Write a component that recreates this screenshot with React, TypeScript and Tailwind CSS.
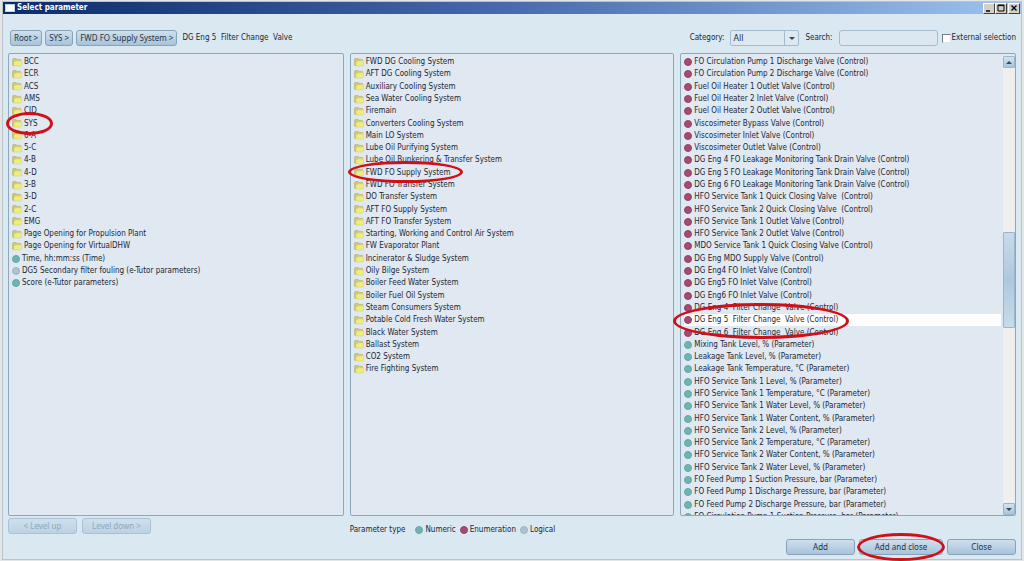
import type { ReactNode } from "react";
import clsx from "clsx";

type Kind = "folder" | "numeric" | "enumeration" | "logical";

type Item = {
  kind: Kind;
  label: string;
};

const toItems = (kind: Kind, labels: string[]): Item[] =>
  labels.map((label) => ({ kind, label }));

const groups: Item[] = [
  ...toItems("folder", [
    "BCC",
    "ECR",
    "ACS",
    "AMS",
    "CID",
    "SYS",
    "6-A",
    "5-C",
    "4-B",
    "4-D",
    "3-B",
    "3-D",
    "2-C",
    "EMG",
    "Page Opening for Propulsion Plant",
    "Page Opening for VirtualDHW",
  ]),
  { kind: "numeric", label: "Time, hh:mm:ss (Time)" },
  { kind: "logical", label: "DG5 Secondary filter fouling (e-Tutor parameters)" },
  { kind: "numeric", label: "Score (e-Tutor parameters)" },
];

const systems = toItems("folder", [
  "FWD DG Cooling System",
  "AFT DG Cooling System",
  "Auxiliary Cooling System",
  "Sea Water Cooling System",
  "Firemain",
  "Converters Cooling System",
  "Main LO System",
  "Lube Oil Purifying System",
  "Lube Oil Bunkering & Transfer System",
  "FWD FO Supply System",
  "FWD FO Transfer System",
  "DO Transfer System",
  "AFT FO Supply System",
  "AFT FO Transfer System",
  "Starting, Working and Control Air System",
  "FW Evaporator Plant",
  "Incinerator & Sludge System",
  "Oily Bilge System",
  "Boiler Feed Water System",
  "Boiler Fuel Oil System",
  "Steam Consumers System",
  "Potable Cold Fresh Water System",
  "Black Water System",
  "Ballast System",
  "CO2 System",
  "Fire Fighting System",
]);

const parameters: Item[] = [
  ...toItems("enumeration", [
    "FO Circulation Pump 1 Discharge Valve (Control)",
    "FO Circulation Pump 2 Discharge Valve (Control)",
    "Fuel Oil Heater 1 Outlet Valve (Control)",
    "Fuel Oil Heater 2 Inlet Valve (Control)",
    "Fuel Oil Heater 2 Outlet Valve (Control)",
    "Viscosimeter Bypass Valve (Control)",
    "Viscosimeter Inlet Valve (Control)",
    "Viscosimeter Outlet Valve (Control)",
    "DG Eng 4 FO Leakage Monitoring Tank Drain Valve (Control)",
    "DG Eng 5 FO Leakage Monitoring Tank Drain Valve (Control)",
    "DG Eng 6 FO Leakage Monitoring Tank Drain Valve (Control)",
    "HFO Service Tank 1 Quick Closing Valve  (Control)",
    "HFO Service Tank 2 Quick Closing Valve  (Control)",
    "HFO Service Tank 1 Outlet Valve (Control)",
    "HFO Service Tank 2 Outlet Valve (Control)",
    "MDO Service Tank 1 Quick Closing Valve (Control)",
    "DG Eng MDO Supply Valve (Control)",
    "DG Eng4 FO Inlet Valve (Control)",
    "DG Eng5 FO Inlet Valve (Control)",
    "DG Eng6 FO Inlet Valve (Control)",
    "DG Eng 4  Filter Change  Valve (Control)",
    "DG Eng 5  Filter Change  Valve (Control)",
    "DG Eng 6  Filter Change  Valve (Control)",
  ]),
  ...toItems("numeric", [
    "Mixing Tank Level, % (Parameter)",
    "Leakage Tank Level, % (Parameter)",
    "Leakage Tank Temperature, °C (Parameter)",
    "HFO Service Tank 1 Level, % (Parameter)",
    "HFO Service Tank 1 Temperature, °C (Parameter)",
    "HFO Service Tank 1 Water Level, % (Parameter)",
    "HFO Service Tank 1 Water Content, % (Parameter)",
    "HFO Service Tank 2 Level, % (Parameter)",
    "HFO Service Tank 2 Temperature, °C (Parameter)",
    "HFO Service Tank 2 Water Content, % (Parameter)",
    "HFO Service Tank 2 Water Level, % (Parameter)",
    "FO Feed Pump 1 Suction Pressure, bar (Parameter)",
    "FO Feed Pump 1 Discharge Pressure, bar (Parameter)",
    "FO Feed Pump 2 Discharge Pressure, bar (Parameter)",
    "FO Circulation Pump 1 Suction Pressure, bar (Parameter)",
  ]),
];

function FolderIcon() {
  return (
    <svg viewBox="0 0 10 9" className="h-[9px] w-[10px] shrink-0" aria-hidden="true">
      <path d="M0.4 7V1.2L1 0.5H4.2L5 1.4H8.6V4H2.5V7.6H1Z" fill="#cbc777" stroke="#a9a872" strokeWidth="0.5" />
      <path d="M2 8V3.9L3 3.2L5 2.8H9.6V7.2L8.8 8Z" fill="#efec80" stroke="#d3cf72" strokeWidth="0.5" />
    </svg>
  );
}

function Dot({ kind }: { kind: Kind }) {
  return (
    <span
      className={clsx(
        "size-2 shrink-0 rounded-full border",
        kind === "numeric" && "border-[#62a9ab] bg-[#6fb3b2]",
        kind === "enumeration" && "border-[#92426a] bg-[#a54a70]",
        kind === "logical" && "border-[#9db3c5] bg-[#b0c2d1]"
      )}
    />
  );
}

function ItemList({ items, selected, label }: { items: Item[]; selected?: string; label: string }) {
  return (
    <ul
      aria-label={label}
      className="grid h-[467px] min-w-0 flex-1 grid-rows-[repeat(38,minmax(0,1fr))] pl-[3px]"
    >
      {items.map((item) => (
        <li
          key={item.label}
          className={clsx(
            "flex items-center gap-[2px] leading-3 whitespace-pre",
            item.label === selected && "bg-white"
          )}
        >
          {item.kind === "folder" ? <FolderIcon /> : <Dot kind={item.kind} />}
          {item.label}
        </li>
      ))}
    </ul>
  );
}

function Panel({ children, marker }: { children: ReactNode; marker: ReactNode }) {
  return (
    <section className="relative min-w-0">
      {/* the last row is cut off by the bottom border */}
      <div className="flex h-[463px] overflow-hidden rounded-[2px] border border-[#8ba9bb] bg-[#e0e8f1] pt-[2px]">
        {children}
      </div>
      {marker}
    </section>
  );
}

function Marker({ className }: { className: string }) {
  return (
    <span
      className={clsx("pointer-events-none absolute rounded-[50%] border-3 border-[#cf1019]", className)}
    />
  );
}

function Arrow({ up = false }: { up?: boolean }) {
  return (
    <svg viewBox="0 0 6 3" className="h-[3px] w-[6px]" aria-hidden="true">
      <path d={up ? "M0 3L3 0L6 3Z" : "M0 0L3 3L6 0Z"} fill="#34495c" />
    </svg>
  );
}

function ScrollBar() {
  const arrow =
    "flex h-3 items-center justify-center rounded-[1px] border border-[#9bb6cb] bg-linear-to-b from-[#d3e3f0] to-[#a9c5da]";
  return (
    <div className="ml-[2px] flex w-3 flex-col bg-[#efefee]">
      <button className={arrow} aria-label="Scroll up">
        <Arrow up />
      </button>
      <div className="flex flex-1 flex-col">
        <div className="grow-165" />
        <div className="grow-94 rounded-[1px] border border-[#9bb6cb] bg-linear-to-b from-[#c8dbea] via-[#adc8de] to-[#c8dcea]" />
        <div className="grow-176" />
      </div>
      <button className={arrow} aria-label="Scroll down">
        <Arrow />
      </button>
    </div>
  );
}

function Button({ children, className, disabled }: { children: ReactNode; className?: string; disabled?: boolean }) {
  return (
    <button
      disabled={disabled}
      className={clsx(
        "h-4 rounded-[3px] border font-['Noto_Sans',sans-serif] leading-3 whitespace-nowrap",
        disabled
          ? "border-[#a9c2d5] bg-linear-to-b from-[#cfdfed] to-[#bcd2e4] text-[#8fa8bc]"
          : "border-[#86a3ba] bg-linear-to-b from-[#cfdfed] to-[#a8c3da] text-[#1f3447]",
        className
      )}
    >
      {children}
    </button>
  );
}

function TitleBar() {
  const control =
    "flex h-[11px] w-3 items-center justify-center border border-t-white border-r-[#404040] border-b-[#404040] border-l-white bg-[#d4d0c8]";
  return (
    <header className="flex h-3 items-center bg-linear-to-r from-[#0a2a6a] via-[#4a6aad] to-[#a0c4ee] pr-px pl-[2px]">
      <span className="mr-[2px] h-2 w-[10px] border border-[#b9d4ee] bg-white" />
      <h1 className="flex-1 leading-3 font-bold text-white">Select parameter</h1>
      <button className={control} aria-label="Minimize">
        <svg viewBox="0 0 8 8" className="size-2">
          <path d="M1 7H5" stroke="#000" strokeWidth="1.5" />
        </svg>
      </button>
      <button className={control} aria-label="Maximize">
        <svg viewBox="0 0 8 8" className="size-2">
          <path d="M1 1H7V7H1ZM1 1.6H7" fill="none" stroke="#000" />
        </svg>
      </button>
      <button className={clsx(control, "ml-px")} aria-label="Close window">
        <svg viewBox="0 0 8 8" className="size-2">
          <path d="M1.5 1.5L6.5 6.5M6.5 1.5L1.5 6.5" stroke="#000" strokeWidth="1.4" />
        </svg>
      </button>
    </header>
  );
}

function Toolbar() {
  return (
    <div className="flex items-center pl-[2px]">
      <nav className="flex items-center gap-[3px]" aria-label="Path">
        <Button className="px-[3px]">Root &gt;</Button>
        <Button className="px-[3px]">SYS &gt;</Button>
        <Button className="px-[3px]">FWD FO Supply System &gt;</Button>
        <span className="ml-[2px] whitespace-pre">DG Eng 5  Filter Change  Valve</span>
      </nav>
      <div className="ml-auto flex items-center">
        <label htmlFor="category">Category:</label>
        <div className="relative ml-[6px] w-[69px]">
          <select
            id="category"
            className="block h-4 w-full appearance-none rounded-[2px] border border-[#a3bccf] bg-[#dde8f1] pl-[2px] text-[9px] leading-3"
          >
            <option>All</option>
          </select>
          <span className="pointer-events-none absolute inset-y-0 right-0 flex w-[15px] items-center justify-center border-l border-[#a3bccf]">
            <Arrow />
          </span>
        </div>
        <label htmlFor="search" className="ml-[6px]">
          Search:
        </label>
        <input
          id="search"
          type="text"
          className="ml-[6px] h-4 w-[99px] rounded-[3px] border border-[#a3bccf] bg-[#dde7f1] px-1"
        />
        <label className="ml-1 flex items-center gap-px">
          <input
            type="checkbox"
            className="size-[9px] appearance-none border border-t-[#6f7d88] border-r-[#e3e3e3] border-b-[#e3e3e3] border-l-[#6f7d88] bg-white"
          />
          External selection
        </label>
      </div>
    </div>
  );
}

const legend: Item[] = [
  { kind: "numeric", label: "Numeric" },
  { kind: "enumeration", label: "Enumeration" },
  { kind: "logical", label: "Logical" },
];

export default function App() {
  return (
    <div className="min-h-screen bg-[#e4e6e5] px-[2px] pt-px font-['DejaVu_Sans_Condensed','DejaVu_Sans',sans-serif] text-[8px] text-[#1b2733]">
      <div className="border border-[#b9c3cb] bg-[#d9e8f1]">
        <TitleBar />
        <main className="px-[5px] pt-4 pb-1">
          <Toolbar />
          <div className="mt-[7px] grid grid-cols-[336fr_325fr_336fr] gap-x-[6px]">
            <Panel marker={<Marker className="top-[59px] -left-[2px] h-[23px] w-[47px]" />}>
              <ItemList items={groups} label="Groups" />
            </Panel>
            <Panel marker={<Marker className="top-[108px] -left-[2px] h-[22px] w-[115px]" />}>
              <ItemList items={systems} label="Systems" />
            </Panel>
            <Panel marker={<Marker className="top-[250px] -left-[7px] h-9 w-[176px]" />}>
              <ItemList
                items={parameters}
                selected="DG Eng 5  Filter Change  Valve (Control)"
                label="Parameters"
              />
              <ScrollBar />
            </Panel>

            <div className="flex gap-[5px] pt-[2px]">
              <Button disabled className="w-[69px]">
                &lt; Level up
              </Button>
              <Button disabled className="w-[69px]">
                Level down &gt;
              </Button>
            </div>
            <div className="flex items-center gap-1 pt-2 leading-3">
              <span className="mr-[6px]">Parameter type</span>
              {legend.map((item) => (
                <span key={item.label} className="flex items-center gap-[2px]">
                  <Dot kind={item.kind} />
                  {item.label}
                </span>
              ))}
            </div>
          </div>
          <footer className="mt-[3px] flex justify-end gap-1">
            <Button className="w-[69px]">Add</Button>
            <div className="relative">
              <Button className="w-[84px]">Add and close</Button>
              <Marker className="-inset-x-[2px] -top-[6px] h-7" />
            </div>
            <Button className="w-[69px]">Close</Button>
          </footer>
        </main>
      </div>
    </div>
  );
}
